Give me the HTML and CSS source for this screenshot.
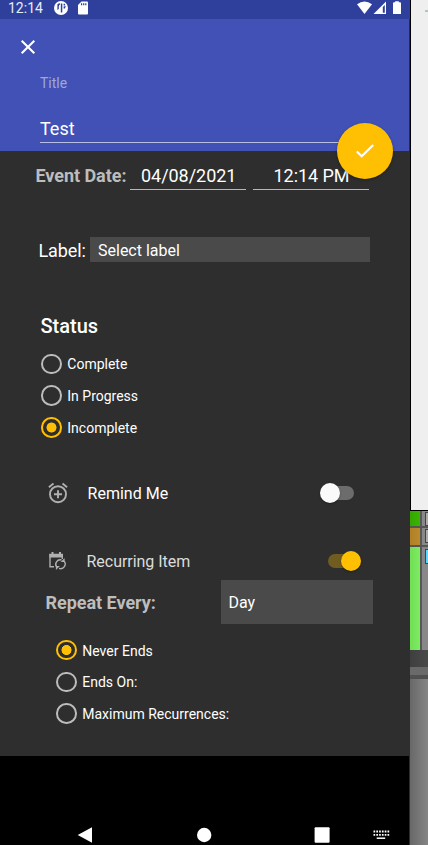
FILE: index.html
```html
<!DOCTYPE html>
<html lang="en">
<head>
<meta charset="utf-8">
<title>Edit event</title>
<link rel="stylesheet" href="styles.css">
</head>
<body>
<div class="screen">
  <main class="phone">
    <div class="statusbar">
      <span class="clock">12:14</span>
      <svg class="notif" width="34" height="14" viewBox="0 0 34 14" fill="#fff"><circle cx="7" cy="7" r="7"/><path d="M3.400 3.200Q4.600 2.200 6 2.200V3.500Q4.800 4 4.800 5.500V8L3.400 9zM6.800 2.400h1.500v9.200H6.800zM9.600 2.800h1.500v1.800H9.600zM9.600 5.600l2.200-.6-.8 2.400H9.600z" fill="#2e409c"/><path d="M27.500 .500H33q1 0 1 1v11q0 1-1 1h-8q-1 0-1-1V4z"/><path d="M27 2.200h1.200v2H27zm2.100 0h1.200v2h-1.200zm2.100 0h1.200v2h-1.200z" fill="#2e409c"/></svg>
      <svg class="signals" width="45" height="14" viewBox="0 0 45 14" fill="#fff"><path d="M0 3.300Q7.500-2.300 15 3.300L7.500 13z"/><path d="M29 .500V13H16.500z"/><path d="M25.800 6l2-2v7.800h-2z" fill="#2e409c"/><path d="M38.200 1.200V.200h3.600v1H43q1 0 1 1V13h-8V2.200q0-1 1-1z"/></svg>
    </div>
    <header class="header">
      <svg class="close" width="14" height="14" viewBox="0 0 14 14" fill="none" stroke="#fff" stroke-width="2.100"><path d="M.7.7l12.600 12.600M13.300.7L.7 13.300"/></svg>
      <label class="title-label"><span>Title</span></label>
      <div class="title-field"><span>Test</span></div>
      <button class="fab" aria-label="Save"><svg width="18" height="14" viewBox="0 0 18 14" fill="none" stroke="#fff" stroke-width="2.100"><path d="M.8 7.400l4.900 4.900L17.200 .900"/></svg></button>
    </header>
    <section class="body">
      <div class="date-row"><span class="strong date-label">Event Date:</span><span class="input date">04/08/2021</span><span class="input time">12:14 PM</span></div>
      <div class="label-row"><span class="label-name">Label:</span><div class="select">Select label</div></div>
      <h2>Status</h2>
      <div class="radios">
        <div class="radio"><i></i><span>Complete</span></div>
        <div class="radio"><i></i><span>In Progress</span></div>
        <div class="radio on"><i></i><span>Incomplete</span></div>
      </div>
      <div class="option remind">
        <svg width="20" height="20" viewBox="0 0 20 20" fill="none" stroke="#b0b0b0" stroke-width="1.900"><circle cx="10" cy="11.200" r="8"/><path d="M10 7.200v8M6 11.200h8M.9 4.200L5.500.6M14.500.6l4.600 3.600"/></svg>
        <span>Remind Me</span><b class="switch"></b>
      </div>
      <div class="option recur">
        <svg width="17" height="19" viewBox="0 0 17 19" fill="none" stroke="#b0b0b0" stroke-width="1.400"><path d="M5 14.800H1V2.500h12.300V7"/><path d="M.4 2h13.600v3.500H.4zM2.500 0h2v2h-2zM10 0h2v2h-2z" fill="#b0b0b0" stroke="none"/><path d="M7.500 14.800A4.500 4.500 0 0 1 12.500 8M14.900 9A4.500 4.500 0 0 1 10 16.300"/><path d="M15.600 6v4h-4zM6.900 17.900v-4h4z" fill="#b0b0b0" stroke="none"/></svg>
        <span>Recurring Item</span><b class="switch checked"></b>
      </div>
      <div class="repeat-row"><span class="strong repeat">Repeat Every:</span><div class="select day">Day</div></div>
      <div class="radios ends">
        <div class="radio on"><i></i><span>Never Ends</span></div>
        <div class="radio"><i></i><span>Ends On:</span></div>
        <div class="radio"><i></i><span>Maximum Recurrences:</span></div>
      </div>
    </section>
    <nav class="navbar">
      <svg width="320" height="16" viewBox="0 0 320 16" fill="#fff"><path d="M-.300 8L14 .200V15.800z"/><circle cx="126.200" cy="8" r="7.200"/><rect x="236.600" y=".300" width="15" height="15.400" rx="1"/><path d="M295.500 4.500h16M295.500 7.800h16" stroke="#fff" stroke-width="1.800" stroke-dasharray="1.700 1.100"/><path d="M298.700 11.200h8.500" stroke="#fff" stroke-width="1.500"/></svg>
    </nav>
  </main>
  <aside class="backdrop">
    <div class="paper"><i></i></div>
    <div class="grid-row green"><i></i><b></b></div>
    <div class="grid-row brown"><i></i><b></b></div>
    <div class="grid-row lime"><i></i><b></b></div>
    <div class="dark"></div>
    <div class="mid"></div>
    <div class="line"></div>
    <div class="rest"></div>
  </aside>
</div>
</body>
</html>
```
FILE: styles.css
```css
* { box-sizing: border-box; }
body { margin: 0; font-family: Roboto, "Liberation Sans", sans-serif; color: #fff; background: #2e2e2e; }
svg { display: block; flex: none; overflow: visible; }
.screen { display: flex; width: 428px; height: 845px; overflow: hidden; }
.phone { width: 410px; height: 845px; display: flex; flex-direction: column; background: #2e2e2e; white-space: nowrap; }
.statusbar { height: 19px; flex: none; background: #2e409c; display: flex; align-items: flex-start; padding: 1px 8px 0; }
.clock { font-size: 14px; line-height: 14px; width: 46px; color: #e9ebf6; }
.signals { margin-left: auto; margin-right: 0; }
.header { height: 132px; flex: none; background: #4151b5; position: relative; padding: 21px 0 0 40px; margin-right: 1px; }
.close { margin: 0 0 0 -19.5px; }
.title-label { display: block; height: 20px; margin-top: 19px; font-size: 14px; line-height: 20px; color: #9fa7d8; }
.title-field { height: 29px; margin-top: 21px; width: 329px; border-bottom: 1px solid #b9bfe3; font-size: 18px; line-height: 30px; }
.fab { position: absolute; left: 337px; top: 104px; width: 56px; height: 56px; border: 0; padding: 0; border-radius: 50%; background: #ffc003; display: grid; place-items: center; box-shadow: 0 1px 3px rgba(0,0,0,.3); }
.body { height: 605px; flex: none; display: flex; flex-direction: column; }
.strong { font-weight: 700; color: #bdbdbd; font-size: 18px; }
.date-row { display: flex; height: 39px; padding: 12px 0 0 35.5px; line-height: 26px; }
.date-label { width: 94.5px; letter-spacing: -.05px; }
.input { height: 27px; border-bottom: 1px solid #b7b7b7; width: 116px; font-size: 18px; letter-spacing: -.04px; }
.date { padding-left: 11px; }
.time { margin-left: 7px; padding-left: 20.5px; }
.label-row { display: flex; margin-top: 47px; height: 25px; padding-left: 38.5px; line-height: 27px; }
.label-name { width: 51.5px; font-size: 18px; letter-spacing: -.1px; }
.select { width: 280px; height: 25px; background: #4a4a4a; padding-left: 8px; font-size: 16px; }
h2 { margin: 51px 0 0 40.5px; font-size: 20px; line-height: 26px; font-weight: 500; }
.radios { margin: 9px 0 0 41px; }
.radio { display: flex; align-items: center; height: 31.8px; font-size: 14px; }
.radio span { padding-top: 1px; }
.radio i { width: 20.6px; height: 20.6px; border: 2px solid #bdbdbd; border-radius: 50%; margin-right: 5.7px; flex: none; }
.radio.on i { border-color: #ffc003; background: radial-gradient(circle, #ffc003 4.700px, transparent 5.300px); }
.option { display: flex; align-items: center; height: 30px; font-size: 16px; }
.option span { padding-top: 1px; }
.remind { margin-top: 34.6px; padding-left: 47.600px; }
.remind span { margin-left: 20px; width: 233px; }
.recur { margin-top: 38.5px; padding-left: 49px; color: #dcdcdc; }
.recur span { margin-left: 20.5px; width: 241.5px; letter-spacing: -.03px; }
.switch { position: relative; width: 27px; height: 14px; border-radius: 7px; background: #6c6c6c; }
.remind .switch { margin-left: 6.6px; }
.switch::after { content: ""; position: absolute; width: 20px; height: 20px; border-radius: 50%; top: -3px; left: -7px; background: #fafafa; box-shadow: 0 1px 2px rgba(0,0,0,.35); }
.recur .switch { margin-top: -1px; }
.switch.checked { background: #705c20; }
.switch.checked::after { left: 13px; background: #ffc003; }
.repeat-row { display: flex; margin-top: 3.5px; height: 44px; padding-left: 45.5px; line-height: 46px; }
.repeat { width: 175px; letter-spacing: -.03px; }
.day { width: 152.5px; height: 44px; }
.ends { margin: 10.2px 0 0 56px; }
.navbar { height: 89px; background: #000; margin-right: 1px; padding: 71px 0 0 78px; }
.backdrop { width: 18px; height: 845px; display: flex; flex-direction: column; background: #585858; }
.paper { height: 511px; background: #efefef; border-left: 1px solid #000; border-bottom: 1px solid #000; padding: 10px 0 0 14px; }
.paper i { display: block; height: 2px; background: #b4c3c0; }
.grid-row { display: flex; justify-content: space-between; background: #585858; border-bottom: 2px solid #555; }
.grid-row i { width: 10px; }
.grid-row b { width: 6px; background: #888; padding: 1px 0 0 3px; }
.grid-row b::before { content: ""; display: block; height: 12px; border: 1px solid #444; border-right: 0; background: #aaa; }
.green { height: 17px; }
.green i { background: linear-gradient(90deg, #35a600, #38b600); }
.brown { height: 19px; }
.brown i { background: linear-gradient(90deg, #ae8028, #bd8a2a); }
.lime { height: 103px; border: 0; }
.lime i { background: linear-gradient(90deg, #70df56, #7eec61); }
.lime b::before { background: #5ed5ff; margin-top: 1px; height: 13px; }
.dark { height: 17px; background: linear-gradient(90deg, #3f3f3f, #4a4a4a); }
.mid { height: 8px; background: #6a6a6a; }
.line { height: 4px; background: #505050; }
.rest { flex: 1; background: linear-gradient(90deg, #686868, #858585); }
```
